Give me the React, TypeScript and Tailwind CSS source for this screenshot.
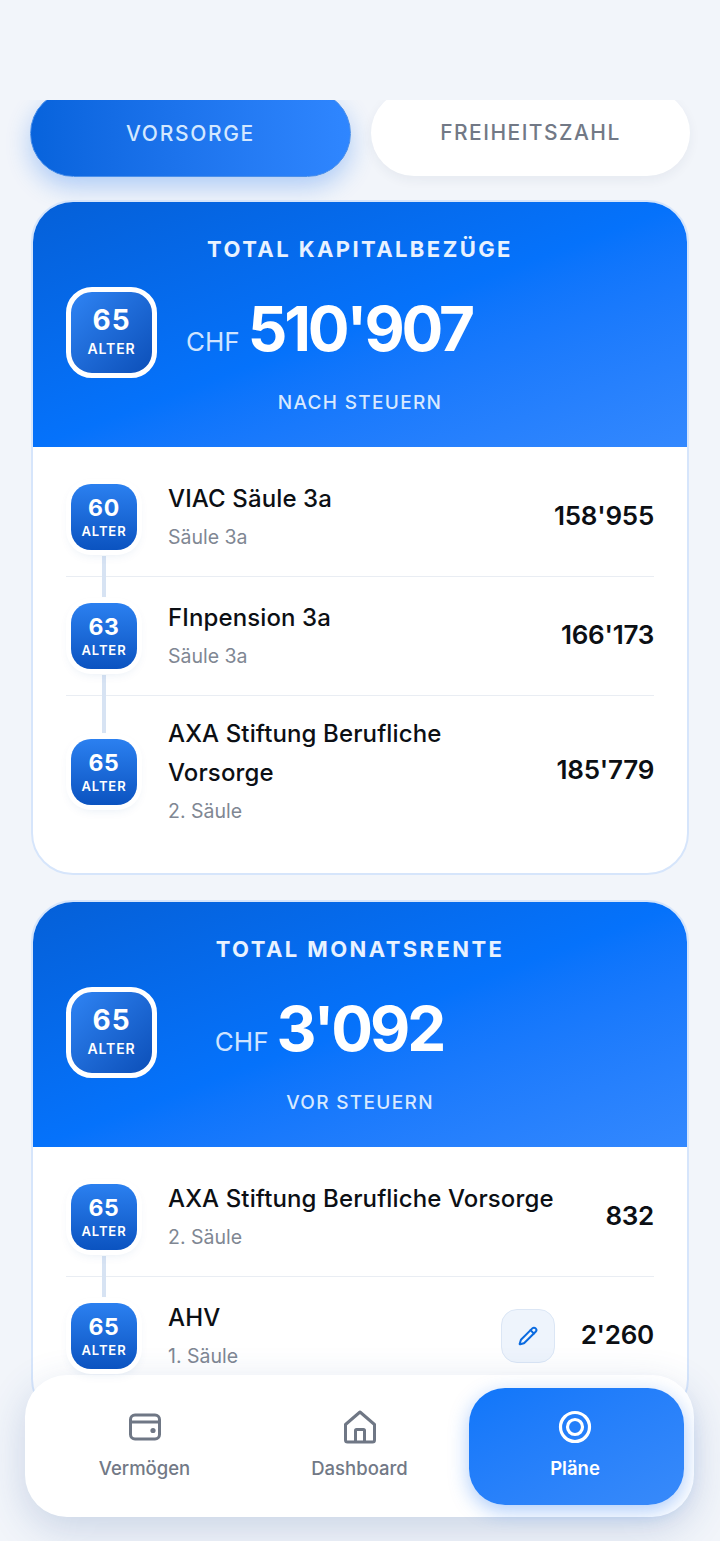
import { Pencil } from "lucide-react";

type Row = {
  age: number;
  title: string;
  sub: string;
  amount: string;
  edit?: boolean;
  tallLine?: boolean;
  multiline?: boolean;
};

const capital: Row[] = [
  { age: 60, title: "VIAC Säule 3a", sub: "Säule 3a", amount: "158'955" },
  { age: 63, title: "FInpension 3a", sub: "Säule 3a", amount: "166'173", tallLine: true },
  { age: 65, title: "AXA Stiftung Berufliche Vorsorge", sub: "2. Säule", amount: "185'779", multiline: true },
];

const pension: Row[] = [
  { age: 65, title: "AXA Stiftung Berufliche Vorsorge", sub: "2. Säule", amount: "832" },
  { age: 65, title: "AHV", sub: "1. Säule", amount: "2'260", edit: true },
];

function AgeBadge({ age }: { age: number }) {
  return (
    <div className="relative z-10 flex h-[66px] w-[66px] shrink-0 flex-col items-center justify-center rounded-[20px] bg-gradient-to-b from-[#2b80f0] to-[#0b53c0] text-white shadow-[0_0_0_5px_#ffffff,0_4px_12px_rgba(20,80,160,0.12)]">
      <span className="text-[23px] leading-[27px] font-bold tracking-[0.03em]">{age}</span>
      <span className="mt-[1px] text-[13px] leading-[16px] font-semibold tracking-[0.07em]">ALTER</span>
    </div>
  );
}

function ListRow({ row, connector, last }: { row: Row; connector: boolean; last: boolean }) {
  return (
    <div
      className={`relative flex items-center pl-[5px] ${row.multiline ? "pt-[17px] pb-[19px]" : "py-[20px]"} ${last ? "" : "border-b border-[#e9edf3]"}`}
    >
      <AgeBadge age={row.age} />
      {connector && (
        <div
          className={`absolute top-[calc(50%+39px)] left-[36px] w-[4px] bg-[#d7e3f3] ${row.tallLine ? "h-[58px]" : "h-[41px]"}`}
        />
      )}
      <div className="ml-[31px] min-w-0 flex-1 translate-y-[1px]">
        <div className="text-[24px] leading-[39px] font-medium tracking-[0.005em] text-[#0c0f14]">{row.title}</div>
        <div className="text-[19.5px] leading-[39px] text-[#808793]">{row.sub}</div>
      </div>
      {row.edit && (
        <div className="mr-[10px] flex h-[54px] w-[54px] items-center justify-center rounded-[16px] border border-[#dbe6f5] bg-[#eef4fc]">
          <Pencil size={20} strokeWidth={2.4} className="text-[#0b6be0]" />
        </div>
      )}
      <div className="ml-[16px] shrink-0 pb-[4px] text-[26px] font-semibold tracking-[-0.01em] text-[#0c0f14]">{row.amount}</div>
    </div>
  );
}

function SummaryCard({
  title,
  value,
  note,
  rows,
}: {
  title: string;
  value: string;
  note: string;
  rows: Row[];
}) {
  return (
    <section className="mx-[1px] overflow-hidden rounded-[42px] border-2 border-[#d6e5fb] bg-white">
      <div className="relative h-[245px] bg-gradient-to-br from-[#0560d8] via-[#0572fb] to-[#3388fe] text-white">
        <div className="pt-[32px] text-center text-[22px] leading-[30px] font-bold tracking-[0.11em] text-[#e8f2ff]">{title}</div>
        <div className="absolute top-[85px] left-[33px] flex h-[91px] w-[91px] flex-col items-center justify-center rounded-[26px] border-[5px] border-white bg-gradient-to-br from-[#2f84f4] to-[#0c4fb8] pb-[4px]">
          <span className="text-[28px] leading-[32px] font-bold tracking-[0.03em]">65</span>
          <span className="mt-[4px] text-[14px] leading-[18px] font-semibold tracking-[0.06em]">ALTER</span>
        </div>
        <div className="mt-[30px] flex h-[70px] items-baseline justify-center pr-[62px]">
          <span className="mr-[8px] text-[26px] text-[#cfe4ff]">CHF</span>
          <span className="text-[62px] leading-[70px] font-bold tracking-[-0.05em]">{value}</span>
        </div>
        <div className="mt-[26px] text-center text-[19px] leading-[26px] font-medium tracking-[0.07em] text-[#d8e9ff]">{note}</div>
      </div>
      <div className="px-[33px] pt-[11px] pb-[24px]">
        {rows.map((row, i) => (
          <ListRow key={row.title} row={row} connector={i < rows.length - 1} last={i === rows.length - 1} />
        ))}
      </div>
    </section>
  );
}

function WalletIcon() {
  return (
    <svg width="34" height="30" viewBox="0 0 34 30" fill="none" stroke="#6f7785" strokeWidth="3">
      <rect x="2.5" y="3" width="29" height="24" rx="4.5" />
      <path d="M2.5 10h29" />
      <circle cx="25" cy="18.5" r="2.6" fill="#6f7785" stroke="none" />
    </svg>
  );
}

function HomeIcon() {
  return (
    <svg width="36" height="36" viewBox="0 0 36 36" fill="none" stroke="#6f7785" strokeWidth="3" strokeLinejoin="round">
      <path d="M3.5 15.5 18 3l14.5 12.5V31a2 2 0 0 1-2 2h-25a2 2 0 0 1-2-2Z" />
      <path d="M13.5 33V21.5a1 1 0 0 1 1-1h7a1 1 0 0 1 1 1V33" />
    </svg>
  );
}

function TargetIcon() {
  return (
    <svg width="34" height="34" viewBox="0 0 34 34" fill="none" stroke="#ffffff" strokeWidth="3.2">
      <circle cx="17" cy="17" r="14.5" />
      <circle cx="17" cy="17" r="7.5" />
    </svg>
  );
}

export default function App() {
  return (
    <div className="relative h-[1541px] w-[720px] overflow-hidden bg-[#f2f5fa] font-['Inter',sans-serif]">
      <div className="h-[100px]" />
      <main className="h-[1441px] overflow-hidden px-[30px]">
        <div className="-mt-[10px] mb-[23px] flex gap-[20px]">
          <button className="h-[87px] w-[321px] rounded-[44px] border border-[#4a8fea] bg-gradient-to-r from-[#0763dc] to-[#2f86ff] text-[21px] font-medium tracking-[0.08em] text-[#d3e8ff] shadow-[0_10px_24px_rgba(20,110,240,0.3)]">
            VORSORGE
          </button>
          <button className="h-[86px] flex-1 rounded-[44px] bg-white text-[21px] font-medium tracking-[0.07em] text-[#727986] shadow-[0_4px_12px_rgba(30,50,90,0.06)]">
            FREIHEITSZAHL
          </button>
        </div>
        <div className="flex flex-col gap-[25px]">
          <SummaryCard title="TOTAL KAPITALBEZÜGE" value="510'907" note="NACH STEUERN" rows={capital} />
          <SummaryCard title="TOTAL MONATSRENTE" value="3'092" note="VOR STEUERN" rows={pension} />
        </div>
      </main>

      <nav className="absolute top-[1375px] left-[25px] flex h-[142px] w-[669px] items-center rounded-[42px] bg-white py-[12px] pr-[10px] pl-[12px] shadow-[0_12px_40px_rgba(40,80,150,0.2)]">
        <div className="flex h-full flex-1 flex-col items-center justify-center gap-[10px] text-[18.5px] font-medium text-[#727986]">
          <div className="flex h-[36px] items-center"><WalletIcon /></div>
          Vermögen
        </div>
        <div className="flex h-full flex-1 flex-col items-center justify-center gap-[10px] pr-[2px] text-[18.5px] font-medium text-[#727986]">
          <div className="flex h-[36px] items-center"><HomeIcon /></div>
          Dashboard
        </div>
        <div className="flex h-[117px] w-[215px] flex-col items-center justify-center gap-[10px] rounded-[36px] bg-gradient-to-br from-[#0f76fa] to-[#388afa] pr-[3px] text-[18.5px] font-semibold text-white shadow-[0_6px_20px_rgba(20,110,240,0.35)]">
          <div className="flex h-[36px] items-center"><TargetIcon /></div>
          Pläne
        </div>
      </nav>
    </div>
  );
}
